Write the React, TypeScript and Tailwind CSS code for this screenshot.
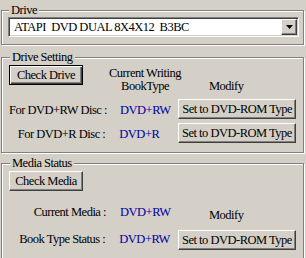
const raised =
  "border border-t-white border-l-white border-r-[#404040] border-b-[#404040] shadow-[inset_-1px_-1px_0_#808080] bg-[#d4d0c8]";
const defaultBtn =
  "border border-black shadow-[inset_1px_1px_0_#fff,inset_-1px_-1px_0_#404040,inset_-2px_-2px_0_#808080] bg-[#d4d0c8]";
const group =
  "border border-[#808080] shadow-[inset_1px_1px_0_#fff,1px_1px_0_#fff] min-w-0";
const legend = "ml-[1px] px-[2px] leading-[14px] bg-[#d4d0c8]";
const blue = "text-[#0000a0]";

function Button({ label, className }: { label: string; className: string }) {
  return (
    <div
      className={`flex items-center justify-center h-[20px] leading-[14px] whitespace-nowrap ${className}`}
    >
      {label}
    </div>
  );
}

function ArrowDown() {
  return (
    <svg width="7" height="4" viewBox="0 0 7 4">
      <path d="M0 0h7L3.5 4z" fill="#000" />
    </svg>
  );
}

export default function App() {
  return (
    <div className="w-[306px] h-[258px] overflow-hidden bg-[#d4d0c8] text-black [font-family:'Liberation_Serif',serif] text-[12.5px] tracking-[-0.5px]">
      <div className="flex flex-col pl-[1px] pr-[2px]">
        {/* Drive */}
        <fieldset className={`${group} mt-[3px] px-[6px] pb-[7px]`}>
          <legend className={legend}>Drive</legend>
          <div className="flex h-[20px] w-[291px] border border-t-[#808080] border-l-[#808080] border-b-white border-r-white shadow-[inset_1px_1px_0_#404040,inset_-1px_-1px_0_#d4d0c8] p-[1px]">
            <div className="flex-1 flex items-center bg-white pl-[4px] whitespace-pre leading-[14px]">
              {"ATAPI  DVD DUAL 8X4X12  B3BC"}
            </div>
            <div className={`${raised} w-[16px] flex items-center justify-center`}>
              <ArrowDown />
            </div>
          </div>
        </fieldset>

        {/* Drive Setting */}
        <fieldset className={`${group} mt-[5px] px-[7px] pb-[9px]`}>
          <legend className={legend}>Drive Setting</legend>
          <div className="flex h-[28px] mt-[1px]">
            <Button label="Check Drive" className={`${defaultBtn} w-[74px]`} />
            <div className="w-[124px] pt-[2px] text-center leading-[13px]">
              <div>Current Writing</div>
              <div>BookType</div>
            </div>
            <div className="pt-[15px] pl-[2px] leading-[13px]">Modify</div>
          </div>
          <div className="flex mt-[6px]">
            <div className="w-[97px] text-right pt-[4px] leading-[14px] whitespace-nowrap">
              For DVD+RW Disc :
            </div>
            <div className={`w-[73px] pl-[14px] pt-[4px] leading-[14px] ${blue}`}>
              DVD+RW
            </div>
            <Button label="Set to DVD-ROM Type" className={`${raised} w-[119px]`} />
          </div>
          <div className="flex mt-[4px]">
            <div className="w-[97px] text-right pt-[4px] leading-[14px] whitespace-nowrap">
              For DVD+R Disc :
            </div>
            <div className={`w-[73px] pl-[14px] pt-[4px] leading-[14px] ${blue}`}>
              DVD+R
            </div>
            <Button label="Set to DVD-ROM Type" className={`${raised} w-[119px]`} />
          </div>
        </fieldset>

        {/* Media Status */}
        <fieldset className={`${group} mt-[3px] px-[7px] pb-[40px]`}>
          <legend className={legend}>Media Status</legend>
          <Button label="Check Media" className={`${raised} w-[74px] mt-[1px]`} />
          <div className="flex mt-[14px] leading-[14px]">
            <div className="w-[97px] text-right whitespace-nowrap">Current Media :</div>
            <div className={`w-[73px] pl-[14px] ${blue}`}>DVD+RW</div>
            <div className="pl-[30px] pt-[3px]">Modify</div>
          </div>
          <div className="flex mt-[8px]">
            <div className="w-[97px] text-right pt-[2px] leading-[14px] whitespace-nowrap">
              Book Type Status :
            </div>
            <div className={`w-[73px] pl-[14px] pt-[2px] leading-[14px] ${blue}`}>
              DVD+RW
            </div>
            <Button label="Set to DVD-ROM Type" className={`${raised} w-[119px]`} />
          </div>
        </fieldset>
      </div>
    </div>
  );
}
